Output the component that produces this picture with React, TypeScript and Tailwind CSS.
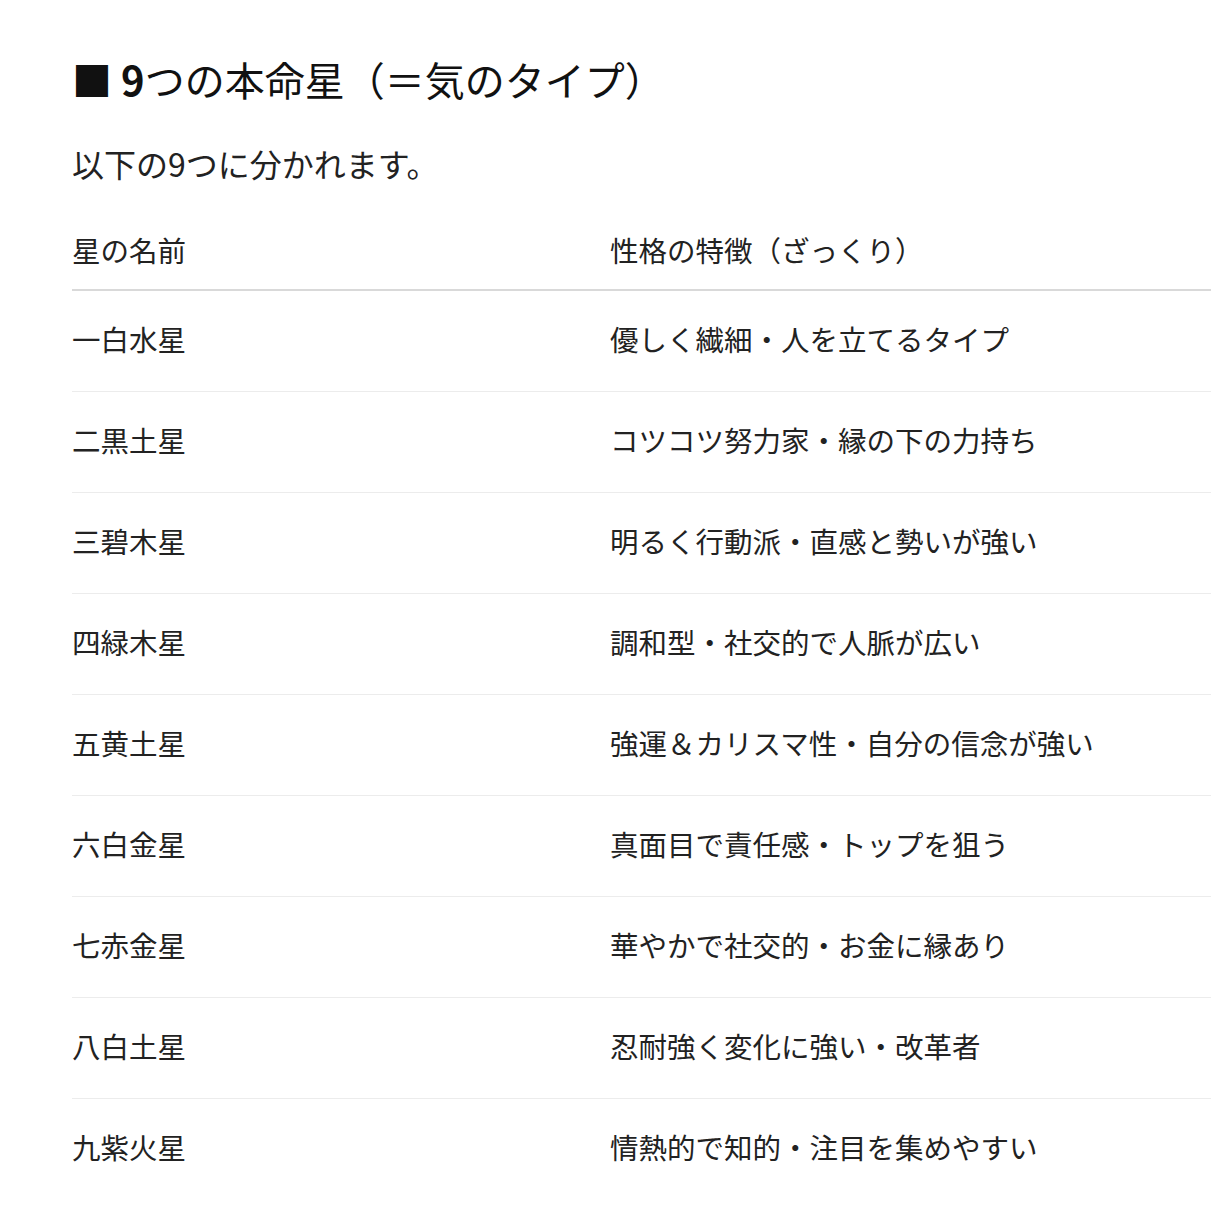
const stars = [
  { name: '一白水星', trait: '優しく繊細・人を立てるタイプ' },
  { name: '二黒土星', trait: 'コツコツ努力家・縁の下の力持ち' },
  { name: '三碧木星', trait: '明るく行動派・直感と勢いが強い' },
  { name: '四緑木星', trait: '調和型・社交的で人脈が広い' },
  { name: '五黄土星', trait: '強運＆カリスマ性・自分の信念が強い' },
  { name: '六白金星', trait: '真面目で責任感・トップを狙う' },
  { name: '七赤金星', trait: '華やかで社交的・お金に縁あり' },
  { name: '八白土星', trait: '忍耐強く変化に強い・改革者' },
  { name: '九紫火星', trait: '情熱的で知的・注目を集めやすい' },
];

export default function App() {
  return (
    <div
      className="min-h-screen bg-white pl-[72px] pt-[52px] text-[#222]"
      style={{ fontFamily: '"Noto Sans CJK JP", "Noto Sans", sans-serif' }}
    >
      <h2 className="text-[40px] leading-[54px] font-normal text-[#111]">
        <span className="font-bold">■ 9</span>つの本命星（＝気のタイプ）
      </h2>
      <p className="mt-[34px] text-[32px] leading-[46px]">以下の9つに分かれます。</p>

      <div className="mt-[43px] text-[28.5px] leading-[42px]">
        {/* header */}
        <div className="grid grid-cols-[538px_1fr] border-b-2 border-[#d9d9d9] pb-[18px]">
          <div>星の名前</div>
          <div>性格の特徴（ざっくり）</div>
        </div>
        {stars.map((s, i) => (
          <div
            key={s.name}
            className={
              i < stars.length - 1
                ? 'grid grid-cols-[538px_1fr] border-b border-[#ececec] pt-[27px] pb-[31px]'
                : 'grid grid-cols-[538px_1fr] pt-[27px] pb-[31px]'
            }
          >
            <div>{s.name}</div>
            <div>{s.trait}</div>
          </div>
        ))}
      </div>
    </div>
  );
}
